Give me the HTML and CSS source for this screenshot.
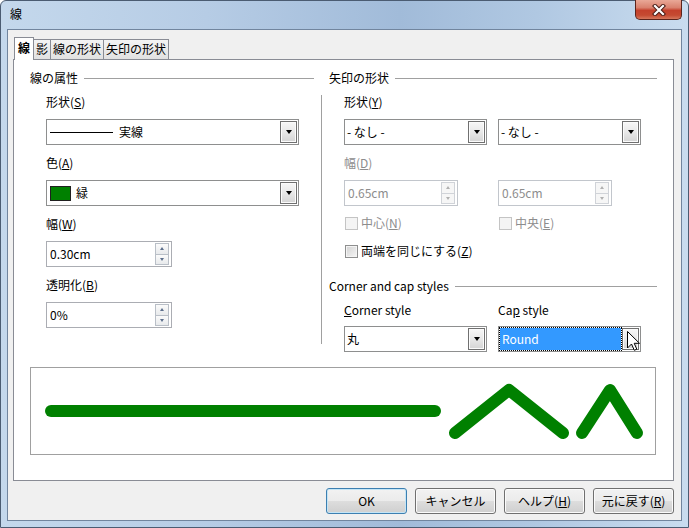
FILE: index.html
```html
<!DOCTYPE html>
<html lang="ja">
<head>
    <meta charset="UTF-8">
    <title>線</title>
    <link rel="stylesheet" href="styles.css">
</head>
<body>
<div class="window">
    <div class="titlebar">
        <span class="title">線</span>
        <div class="close-btn">
            <svg width="14" height="12" viewBox="0 0 14 12">
                <path d="M3 2 L11 10 M11 2 L3 10" stroke="#4a1d16" stroke-width="4.2" stroke-linecap="square"/>
                <path d="M3 2 L11 10 M11 2 L3 10" stroke="#ffffff" stroke-width="2.2" stroke-linecap="square"/>
            </svg>
        </div>
    </div>

    <div class="client">
        <div class="tabs">
            <div class="tab active">線</div>
            <div class="tab">影</div>
            <div class="tab">線の形状</div>
            <div class="tab">矢印の形状</div>
        </div>

        <div class="tab-page">
            <div class="columns">
                <!-- line properties -->
                <div class="col">
                    <div class="heading">線の属性</div>
                    <div class="indent">
                        <div class="label first">形状(<u>S</u>)</div>
                        <div class="combo combo-wide">
                            <div class="combo-value pad"><span class="line-sample"></span>実線</div>
                            <div class="drop-btn"></div>
                        </div>

                        <div class="label">色(<u>A</u>)</div>
                        <div class="combo combo-wide">
                            <div class="combo-value pad"><span class="swatch"></span>緑</div>
                            <div class="drop-btn"></div>
                        </div>

                        <div class="label">幅(<u>W</u>)</div>
                        <div class="spin spin-wide">
                            <span class="spin-value">0.30cm</span>
                            <div class="spin-btns"><span class="up"></span><span class="down"></span></div>
                        </div>

                        <div class="label">透明化(<u>B</u>)</div>
                        <div class="spin spin-wide">
                            <span class="spin-value">0%</span>
                            <div class="spin-btns"><span class="up"></span><span class="down"></span></div>
                        </div>
                    </div>
                </div>

                <div class="vsep"></div>

                <!-- arrow styles -->
                <div class="col">
                    <div class="heading">矢印の形状</div>
                    <div class="indent-r">
                        <div class="label first">形状(<u>Y</u>)</div>
                        <div class="pair">
                            <div class="combo">
                                <div class="combo-value">- なし -</div>
                                <div class="drop-btn"></div>
                            </div>
                            <div class="combo">
                                <div class="combo-value">- なし -</div>
                                <div class="drop-btn"></div>
                            </div>
                        </div>

                        <div class="label disabled">幅(<u>D</u>)</div>
                        <div class="pair">
                            <div class="spin spin-narrow disabled">
                                <span class="spin-value">0.65cm</span>
                                <div class="spin-btns"><span class="up"></span><span class="down"></span></div>
                            </div>
                            <div class="spin spin-narrow disabled">
                                <span class="spin-value">0.65cm</span>
                                <div class="spin-btns"><span class="up"></span><span class="down"></span></div>
                            </div>
                        </div>

                        <div class="pair check-row">
                            <div class="check disabled"><span class="box"></span>中心(<u>N</u>)</div>
                            <div class="check disabled"><span class="box"></span>中央(<u>E</u>)</div>
                        </div>
                        <div class="check check-row2"><span class="box"></span>両端を同じにする(<u>Z</u>)</div>
                    </div>

                    <div class="heading heading-corner">Corner and cap styles</div>
                    <div class="indent-r">
                        <div class="pair label-pair">
                            <div><u>C</u>orner style</div>
                            <div>Ca<u>p</u> style</div>
                        </div>
                        <div class="pair">
                            <div class="combo">
                                <div class="combo-value">丸</div>
                                <div class="drop-btn"></div>
                            </div>
                            <div class="combo focused">
                                <div class="combo-value">Round</div>
                                <div class="drop-btn"></div>
                                <svg class="cursor" width="14" height="21" viewBox="0 0 14 21">
                                    <path d="M0.5 0.5 L0.5 17 L4.5 13 L7.3 19.3 L9.8 18.2 L7.2 12.3 L12.5 12.3 Z" fill="#ffffff" stroke="#000000" stroke-width="1" stroke-linejoin="miter"/>
                                </svg>
                            </div>
                        </div>
                    </div>
                </div>
            </div>

            <div class="preview">
                <svg width="624" height="86" viewBox="0 0 624 86">
                    <g fill="none" stroke="#008000" stroke-width="12" stroke-linecap="round" stroke-linejoin="round">
                        <path d="M20 43 L404 43"/>
                        <path d="M424 65 L478 22 L532 65"/>
                        <path d="M551 65 L579 22 L606 65"/>
                    </g>
                </svg>
            </div>
        </div>

        <div class="buttons">
            <div class="btn default">OK</div>
            <div class="btn">キャンセル</div>
            <div class="btn">ヘルプ(<u>H</u>)</div>
            <div class="btn">元に戻す(<u>R</u>)</div>
        </div>
    </div>
</div>
</body>
</html>
```

FILE: styles.css
```css
* {
    box-sizing: border-box;
}
body {
    margin: 0;
    width: 689px;
    height: 528px;
    overflow: hidden;
    background: #ffffff;
    font-family: "Noto Sans CJK JP", "Noto Sans", sans-serif;
    font-size: 12px;
    line-height: 16px;
    color: #000000;
}
u {
    text-underline-offset: 1px;
}

/* window frame */
.window {
    width: 689px;
    height: 528px;
    display: flex;
    flex-direction: column;
    border: 1px solid #4b5c72;
    border-radius: 6px 6px 0 0;
    background: linear-gradient(to right, #c4d8ec 0%, #b6cce5 30%, #a1bbd9 58%, #b0c8e2 78%, #c9dcef 100%);
}
.titlebar {
    height: 28px;
    display: flex;
    align-items: flex-start;
    padding-left: 9px;
}
.title {
    margin-top: 5px;
}
.close-btn {
    margin-left: auto;
    margin-right: 6px;
    margin-top: -1px;
    width: 47px;
    height: 20px;
    display: flex;
    align-items: center;
    justify-content: center;
    border: 1px solid #5b241c;
    border-top: none;
    border-radius: 0 0 5px 5px;
    background: linear-gradient(#e9a897 0%, #d9816e 40%, #c4412c 55%, #c54a31 80%, #d6775c 100%);
}

/* client area */
.client {
    flex: 1;
    display: flex;
    flex-direction: column;
    margin: 0 6px 6px 6px;
    padding: 7px 7px 0 5px;
    border: 1px solid #71859e;
    background: #f0f0f0;
}

/* tabs */
.tabs {
    height: 22px;
    display: flex;
    align-items: flex-end;
    padding-left: 1px;
    position: relative;
    z-index: 1;
}
.tab {
    height: 20px;
    padding: 0 2px;
    border: 1px solid #898c95;
    border-bottom: none;
    border-left: none;
    background: linear-gradient(#f4f4f4, #e1e1e1);
    line-height: 18px;
}
.tab.active {
    height: 23px;
    margin-bottom: -1px;
    padding: 0 3px;
    border-left: 1px solid #898c95;
    background: #ffffff;
    font-weight: bold;
    line-height: 20px;
}
.tab-page {
    height: 422px;
    padding: 10px 16px 0 16px;
    border: 1px solid #898c95;
    background: #ffffff;
}

/* two group columns */
.columns {
    display: grid;
    grid-template-columns: 284px 1px 1fr;
    column-gap: 7px;
    align-items: start;
}
.vsep {
    margin-top: 25px;
    height: 249px;
    background: #a0a0a0;
}
.heading {
    display: flex;
    align-items: center;
    gap: 6px;
}
.heading::after {
    content: "";
    flex: 1;
    height: 1px;
    background: #a0a0a0;
}
.heading-corner {
    margin-top: 19px;
}
.indent {
    padding-left: 16px;
}
.indent-r {
    padding-left: 15px;
}
.label {
    margin-top: 10px;
    margin-bottom: 9px;
}
.label.first {
    margin-top: 8px;
}
.disabled {
    color: #8d8d8d;
}
.pair {
    display: grid;
    grid-template-columns: 143px 143px;
    column-gap: 11px;
}
.label-pair {
    margin-top: 8px;
    margin-bottom: 8px;
}

/* combo boxes */
.combo {
    height: 26px;
    display: flex;
    padding: 1px;
    border: 1px solid #8e8f8f;
    background: #ffffff;
}
.combo-wide {
    width: 253px;
}
.combo-value {
    flex: 1;
    display: flex;
    align-items: center;
    padding-left: 1px;
    white-space: nowrap;
}
.combo-value.pad {
    padding-left: 2px;
}
.drop-btn {
    width: 17px;
    height: 22px;
    border: 1px solid #707070;
    background: linear-gradient(#f7f7f7 0%, #e8e8e8 50%, #d4d4d4 100%);
    box-shadow: inset 0 0 0 1px #fbfbfb;
    display: flex;
    align-items: center;
    justify-content: center;
}
.drop-btn::after {
    content: "";
    border-left: 3.5px solid transparent;
    border-right: 3.5px solid transparent;
    border-top: 4px solid #000000;
}
.line-sample {
    width: 63px;
    height: 1px;
    margin-right: 6px;
    background: #000000;
}
.swatch {
    width: 21px;
    height: 15px;
    margin-right: 5px;
    border: 1px solid #202020;
    background: #008000;
}
.combo.focused {
    position: relative;
}
.combo.focused .combo-value {
    margin-right: 1px;
    padding-left: 2px;
    background: #3399ff;
    color: #ffffff;
    outline: 1px dotted #000000;
}
.cursor {
    position: absolute;
    left: 128px;
    top: 4px;
}

/* spin fields */
.spin {
    height: 26px;
    display: flex;
    align-items: center;
    padding-left: 3px;
    border: 1px solid #abadb3;
    background: #ffffff;
}
.spin-wide {
    width: 126px;
}
.spin-narrow {
    width: 114px;
}
.spin.disabled {
    border-color: #c2c6cc;
}
.spin-value {
    flex: 1;
}
.spin-btns {
    width: 14px;
    height: 22px;
    margin-right: 2px;
    display: flex;
    flex-direction: column;
}
.spin-btns span {
    flex: 1;
    display: flex;
    align-items: center;
    justify-content: center;
    border: 1px solid #b9bfc7;
    background: linear-gradient(#fbfbfb, #e8eaec);
}
.spin-btns .down {
    border-top: none;
}
.spin-btns .up::after {
    content: "";
    border-left: 2.5px solid transparent;
    border-right: 2.5px solid transparent;
    border-bottom: 3px solid #5d6f8c;
}
.spin-btns .down::after {
    content: "";
    border-left: 2.5px solid transparent;
    border-right: 2.5px solid transparent;
    border-top: 3px solid #5d6f8c;
}
.spin.disabled .spin-btns span {
    border-color: #d0d3d8;
    background: #f6f6f6;
}
.spin.disabled .up::after {
    border-bottom-color: #b0b0b0;
}
.spin.disabled .down::after {
    border-top-color: #b0b0b0;
}

/* check boxes */
.check {
    display: flex;
    align-items: center;
    height: 16px;
}
.check .box {
    width: 13px;
    height: 13px;
    margin-left: 1px;
    margin-right: 3px;
    border: 1px solid #8e8f8f;
    background: linear-gradient(135deg, #d2d2d2, #f6f6f6);
    box-shadow: inset 0 0 0 1px #f4f4f4;
}
.check.disabled .box {
    border-color: #c4c4c4;
    background: #f4f4f4;
    box-shadow: none;
}
.check-row {
    margin-top: 9px;
}
.check-row2 {
    margin-top: 12px;
}

/* preview */
.preview {
    width: 626px;
    height: 88px;
    margin-top: 15px;
    border: 1px solid #a0a0a0;
    background: #ffffff;
}
.preview svg {
    display: block;
}

/* dialog buttons */
.buttons {
    display: flex;
    justify-content: flex-end;
    gap: 8px;
    margin-top: 7px;
}
.btn {
    width: 81px;
    height: 26px;
    display: flex;
    align-items: center;
    justify-content: center;
    border: 1px solid #707070;
    border-radius: 3px;
    background: linear-gradient(#f2f2f2 0%, #ebebeb 50%, #dddddd 51%, #cfcfcf 100%);
    box-shadow: inset 0 0 0 1px #fbfbfb;
}
.btn.default {
    border-color: #3c7fb1;
    box-shadow: inset 0 0 0 1px #c4e5f6;
}
```
